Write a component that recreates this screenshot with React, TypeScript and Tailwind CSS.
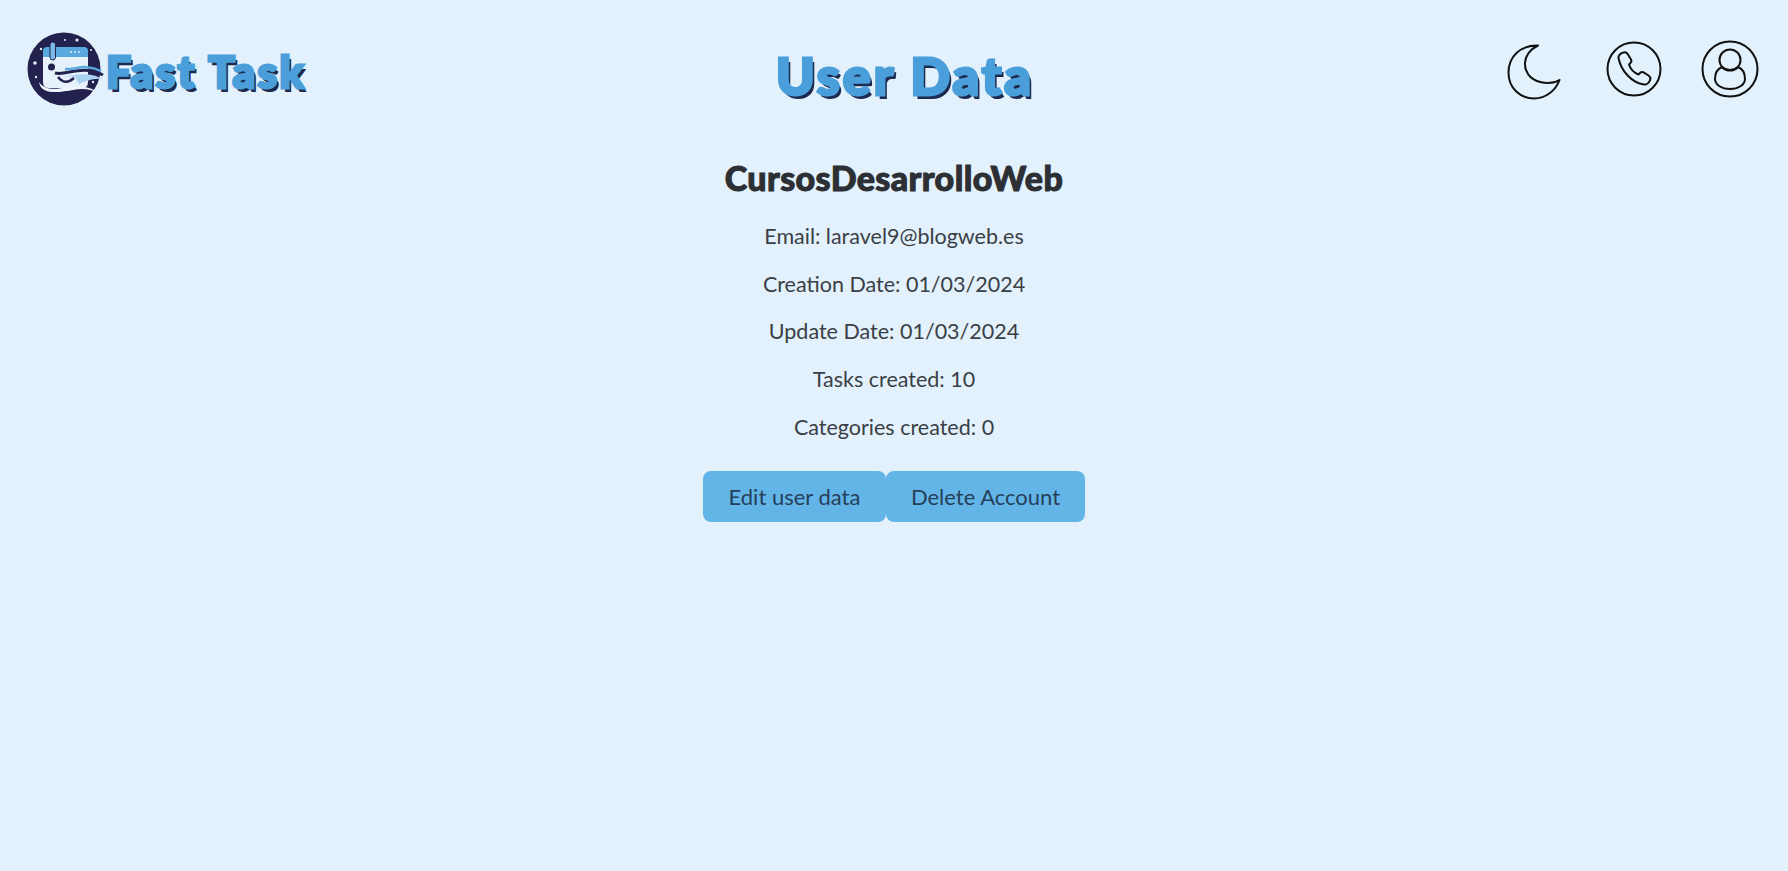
import React from "react";

function Logo() {
  return (
    <svg width="76" height="76" viewBox="0 0 76 76" className="shrink-0 overflow-visible">
      <circle cx="37" cy="37" r="36.5" fill="#23224f" />
      <g fill="#dfeefa">
        <circle cx="14" cy="17" r="1.2" />
        <circle cx="38" cy="8" r="1" />
        <circle cx="50" cy="8" r="1.6" />
        <circle cx="8" cy="31" r="1.8" />
        <circle cx="9" cy="45" r="1.2" />
        <circle cx="66" cy="50" r="1.2" />
        <circle cx="64" cy="18" r="1" />
      </g>
      <path d="M16 19 Q16 15 20 15 H57 Q61 15 61 19 V25 H16 Z" fill="#5aa9de" />
      <path d="M16 25 H61 V50 Q61 56 55 56 H22 Q16 56 16 50 Z" fill="#e6f1fb" />
      <rect x="23" y="10" width="5.500" height="18" rx="2.700" fill="#7db9e6" stroke="#23224f" strokeWidth="1" />
      <circle cx="44" cy="20" r="1" fill="#dcebf8" />
      <circle cx="48" cy="20" r="1" fill="#dcebf8" />
      <circle cx="52" cy="20" r="1" fill="#dcebf8" />
      <circle cx="24.500" cy="35" r="3.500" fill="#23224f" />
      <path d="M28 41 C40 44 54 32 76 43" fill="none" stroke="#23224f" strokeWidth="3" />
      <path d="M38 37 C48 38 58 31 74 39" fill="none" stroke="#5aa9de" strokeWidth="2.500" />
      <path d="M31 45 Q38 54 47 46" fill="none" stroke="#23224f" strokeWidth="2.500" />
      <path d="M36 44 C46 45 58 38 76 47 C64 46 58 50 52 52 L48 45 Z" fill="#a9d2f0" />
      <path d="M12 50 C14 64 34 60 46 58 C56 56 64 57 74 62 C62 54 50 53 40 55 C28 58 17 58 12 50 Z" fill="#eef6fd" />
    </svg>
  );
}

function Moon() {
  return (
    <svg width="54" height="56" viewBox="0 0 54 56" fill="none" stroke="#111" strokeWidth="2" strokeLinejoin="round">
      <path d="M31 1.500 C13 1 1.500 13 1.500 28.500 C1.500 44 13 54.500 27 54.500 C39 54.500 49 46 52.500 36 C47 39.500 39 39.500 33 38 C22 35 17.500 27 18 19 C18.500 11 24 5 31 1.500 Z" />
    </svg>
  );
}

function Phone() {
  return (
    <svg width="56" height="56" viewBox="0 0 56 56" fill="none" stroke="#111" strokeWidth="2" strokeLinejoin="round">
      <circle cx="28" cy="28" r="26.500" />
      <path d="M12.500 17 C12 14.500 15 12 17.500 11.500 C19.500 11 21 11.500 22 13.500 L25 18.500 C25.800 20 25.500 21.300 24 22.500 L23 23.500 C24.500 28.500 27.500 31.500 32.500 33.500 L34 32 C35.300 30.800 36.500 30.800 38 31.600 L42.500 34.500 C44.500 35.700 44.800 37.500 44 39.300 C43 41.500 40.500 44 38 43.500 C26 42 15 30 12.500 17 Z" />
    </svg>
  );
}

function User() {
  return (
    <svg width="58" height="58" viewBox="0 0 58 58" fill="none" stroke="#111" strokeWidth="2" strokeLinejoin="round">
      <circle cx="29" cy="29" r="27.500" />
      <circle cx="29" cy="20" r="10.500" />
      <path d="M21 27 C16 29 14 34 14 39 C14 45 21 49 29 49 C37 49 44 45 44 39 C44 34 42 29 37 27 C33 31 25 31 21 27 Z" />
    </svg>
  );
}

const Row = ({ children }: { children: React.ReactNode }) => (
  <p className="text-[21.500px] leading-[28px] text-[#3a4046] m-0">{children}</p>
);

export default function App() {
  return (
    <div className="min-h-[871px] bg-[#e2f1fb] font-['Lato','Open_Sans',sans-serif]">
      <header className="flex items-start pl-[27px] pr-[29px] pt-[32px] h-[140px]">
        <div className="flex items-center gap-[3px] w-[308px] shrink-0">
          <Logo />
          <span className="text-[44px] leading-none font-black text-[#4a9fdb] [-webkit-text-stroke:3px_#4a9fdb] [text-shadow:3px_4px_0_#1d2a50] tracking-[2.500px] whitespace-nowrap mt-[2px]">
            Fast Task
          </span>
        </div>
        <div className="flex-1 flex justify-center mr-[32px]">
          <h1 className="mt-[17px] text-[52px] leading-none font-black text-[#4a9fdb] [-webkit-text-stroke:3px_#4a9fdb] [text-shadow:3px_4px_0_#1d2a50] tracking-[3px] whitespace-nowrap">
            User Data
          </h1>
        </div>
        <div className="flex items-center h-[74px]">
          <div className="mt-[6px] mr-[45px]"><Moon /></div>
          <div className="mr-[39px]"><Phone /></div>
          <User />
        </div>
      </header>
      <main className="flex flex-col items-center">
        <h2 className="text-[34px] leading-[38px] font-black text-[#2c2f33] mt-[19px] mb-[25px] tracking-[0.400px] [-webkit-text-stroke:1px_#2c2f33]">
          CursosDesarrolloWeb
        </h2>
        <div className="flex flex-col items-center gap-[19.700px]">
          <Row>Email: laravel9@blogweb.es</Row>
          <Row>Creation Date: 01/03/2024</Row>
          <Row>Update Date: 01/03/2024</Row>
          <Row>Tasks created: 10</Row>
          <Row>Categories created: 0</Row>
        </div>
        <div className="flex mt-[30px]">
          <button className="h-[51px] w-[183px] rounded-[8px] bg-[#63b5e7] text-[22px] text-[#25405a]">Edit user data</button>
          <button className="h-[51px] w-[199px] rounded-[8px] bg-[#63b5e7] text-[22px] text-[#25405a]">Delete Account</button>
        </div>
      </main>
    </div>
  );
}
